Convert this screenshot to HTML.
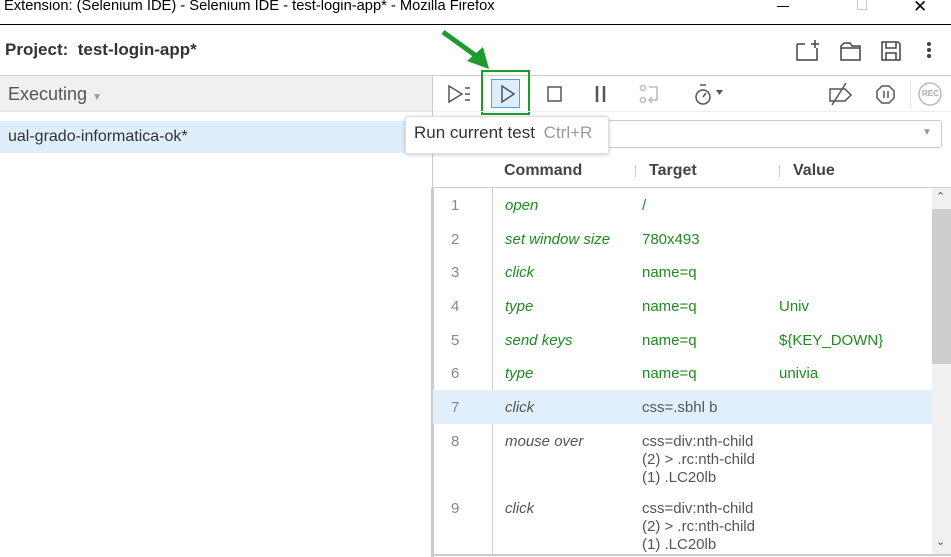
<!DOCTYPE html>
<html><head><meta charset="utf-8"><style>
*{margin:0;padding:0;box-sizing:border-box}
body{width:951px;height:557px;position:relative;overflow:hidden;background:#fff;font-family:"Liberation Sans",Arial,sans-serif;color:#333}
.a{position:absolute}
.t{font-size:15px;white-space:nowrap}
.g{color:#1f8a1f}
.d{color:#555}
.n{color:#888;font-size:15px}
</style></head><body>
<div class="a t" style="left:4px;top:-2px;font-size:14.7px;color:#000">Extension: (Selenium IDE) - Selenium IDE - test-login-app* - Mozilla Firefox</div>
<div class="a" style="left:777px;top:6px;width:12px;height:1px;background:#000"></div>
<div class="a" style="left:857px;top:0;width:10px;height:10px;border:1px solid #ccc;border-top:none"></div>
<div class="a t" style="left:913px;top:-3px;font-size:17px;color:#000">✕</div>
<div class="a" style="left:0;top:24px;width:951px;height:1px;background:#000"></div>
<div class="a t" style="left:5px;top:40px;font-size:17px;font-weight:bold;color:#333">Project:&nbsp; test-login-app*</div>
<svg class="a" style="left:790px;top:36px" width="150" height="28" fill="none" stroke="#444" stroke-width="1.5">
<path d="M7 8h8M7 8v16h20V12M25 4v8M21 8h8"/>
<path d="M51 10l3-3h6l2 3h8v14H51z M51 12h19"/>
<path d="M92 6h16l2 2v16H92z M96 6v6h10V6 M96 24v-7h10v7"/>
<circle cx="139" cy="8" r="1.3" fill="#444"/><circle cx="139" cy="14" r="1.3" fill="#444"/><circle cx="139" cy="20" r="1.3" fill="#444"/>
</svg>
<div class="a" style="left:0;top:75px;width:951px;height:1px;background:#ccc"></div>
<div class="a" style="left:0;top:76px;width:432px;height:36px;background:#f0f0f0;border-bottom:1px solid #e0e0e0"></div>
<div class="a t" style="left:8px;top:84px;font-size:18px;color:#555">Executing <span style="font-size:10px;color:#999">▼</span></div>
<div class="a" style="left:0;top:121px;width:432px;height:32px;background:#deeefb"></div>
<div class="a t" style="left:8px;top:128px;font-size:16px">ual-grado-informatica-ok*</div>
<div class="a" style="left:432px;top:76px;width:1px;height:481px;background:#ccc"></div>
<div class="a" style="left:481px;top:70px;width:49px;height:45px;border:2px solid #1e9b2e"></div>
<div class="a" style="left:491px;top:79px;width:29px;height:29px;background:#ddeefd;border:1px solid #5b9ce8"></div>
<svg class="a" style="left:440px;top:80px" width="511" height="30" fill="none" stroke="#555" stroke-width="1.5">
<path d="M9 6l13 8-13 8z M25 8h5M25 14h5M25 20h5"/>
<path d="M62 6l12 8-12 8z"/>
<rect x="108" y="7" width="13" height="14"/>
<path d="M157 6v16M164 6v16" stroke-width="2.5"/>
<g stroke="#bbb"><circle cx="203" cy="8" r="2.5"/><circle cx="203" cy="20" r="2.5"/><path d="M209 7h8v13h-8M212 17l-3 3 3 3"/></g>
<circle cx="263" cy="17" r="7"/><path d="M260 5h6M263 17l3-4"/><path d="M276 10h7l-3.5 5z" fill="#555" stroke="none"/>
<path d="M390 9h15l6 6-6 6h-15z M392 25l14-22"/>
<path d="M442 6h7l5 5v7l-5 5h-7l-5-5v-7z M444 11v7M448 11v7"/>
<circle cx="490" cy="14" r="11" stroke="#bbb"/>
</svg>
<div class="a t" style="left:922px;top:89px;font-size:8px;color:#aaa;font-weight:bold">REC</div>
<div class="a" style="left:910px;top:80px;width:1px;height:28px;background:#e5e5e5"></div>
<div class="a" style="left:433px;top:111px;width:518px;height:1px;background:#eee"></div>
<div class="a" style="left:440px;top:120px;width:502px;height:28px;border:1px solid #ccc;border-radius:3px"></div>
<div class="a t" style="left:922px;top:127px;font-size:10px;color:#999">▼</div>
<div class="a" style="left:405px;top:116px;width:204px;height:38px;background:#fff;border:1px solid #ddd;border-radius:3px;box-shadow:0 1px 4px rgba(0,0,0,.2)"></div>
<div class="a t" style="left:414px;top:123px;font-size:17px;color:#333">Run current test <span style="color:#999;margin-left:4px">Ctrl+R</span></div>
<svg class="a" style="left:435px;top:25px" width="80" height="50"><path d="M8 7L44 33" stroke="#1e9b2e" stroke-width="5"/><path d="M54 44L32 36 48 22z" fill="#1e9b2e"/></svg>
<div class="a t" style="left:504px;top:162px;font-weight:bold;font-size:16px;color:#444">Command</div>
<div class="a t" style="left:649px;top:162px;font-weight:bold;font-size:16px;color:#444">Target</div>
<div class="a t" style="left:793px;top:162px;font-weight:bold;font-size:16px;color:#444">Value</div>
<div class="a" style="left:635px;top:165px;width:1px;height:12px;background:#ccc"></div>
<div class="a" style="left:779px;top:165px;width:1px;height:12px;background:#ccc"></div>
<div class="a" style="left:432px;top:187px;width:519px;height:1px;background:#ccc"></div>
<div class="a" style="left:431px;top:188px;width:3px;height:369px;background:#ccc"></div>
<div class="a" style="left:492px;top:188px;width:1px;height:366px;background:#ccc"></div>
<div class="a" style="left:432px;top:554px;width:519px;height:2px;background:#ccc"></div>
<div class="a" style="left:932px;top:188px;width:19px;height:366px;background:#f0f0f0"></div>
<div class="a" style="left:932px;top:209px;width:19px;height:155px;background:#cdcdcd"></div>
<div class="a t" style="left:936px;top:190px;font-size:11px;color:#555">⌃</div>
<div class="a t" style="left:936px;top:535px;font-size:11px;color:#555">⌄</div>
<div class="a" style="left:433px;top:390px;width:499px;height:34px;background:#e1effc"></div>
<div class="a n" style="left:451px;top:197px">1</div><div class="a t g" style="left:505px;top:197px;font-style:italic">open</div><div class="a t g" style="left:642px;top:197px">/</div>
<div class="a n" style="left:451px;top:231px">2</div><div class="a t g" style="left:505px;top:231px;font-style:italic">set window size</div><div class="a t g" style="left:642px;top:231px">780x493</div>
<div class="a n" style="left:451px;top:264px">3</div><div class="a t g" style="left:505px;top:264px;font-style:italic">click</div><div class="a t g" style="left:642px;top:264px">name=q</div>
<div class="a n" style="left:451px;top:298px">4</div><div class="a t g" style="left:505px;top:298px;font-style:italic">type</div><div class="a t g" style="left:642px;top:298px">name=q</div><div class="a t g" style="left:779px;top:298px">Univ</div>
<div class="a n" style="left:451px;top:332px">5</div><div class="a t g" style="left:505px;top:332px;font-style:italic">send keys</div><div class="a t g" style="left:642px;top:332px">name=q</div><div class="a t g" style="left:779px;top:332px">${KEY_DOWN}</div>
<div class="a n" style="left:451px;top:365px">6</div><div class="a t g" style="left:505px;top:365px;font-style:italic">type</div><div class="a t g" style="left:642px;top:365px">name=q</div><div class="a t g" style="left:779px;top:365px">univia</div>
<div class="a n" style="left:451px;top:399px">7</div><div class="a t d" style="left:505px;top:399px;font-style:italic">click</div><div class="a t d" style="left:642px;top:399px">css=.sbhl b</div>
<div class="a n" style="left:451px;top:433px">8</div><div class="a t d" style="left:505px;top:433px;font-style:italic">mouse over</div><div class="a t d" style="left:642px;top:433px;line-height:18px">css=div:nth-child<br>(2) &gt; .rc:nth-child<br>(1) .LC20lb</div>
<div class="a n" style="left:451px;top:500px">9</div><div class="a t d" style="left:505px;top:500px;font-style:italic">click</div><div class="a t d" style="left:642px;top:500px;line-height:18px">css=div:nth-child<br>(2) &gt; .rc:nth-child<br>(1) .LC20lb</div>
</body></html>
